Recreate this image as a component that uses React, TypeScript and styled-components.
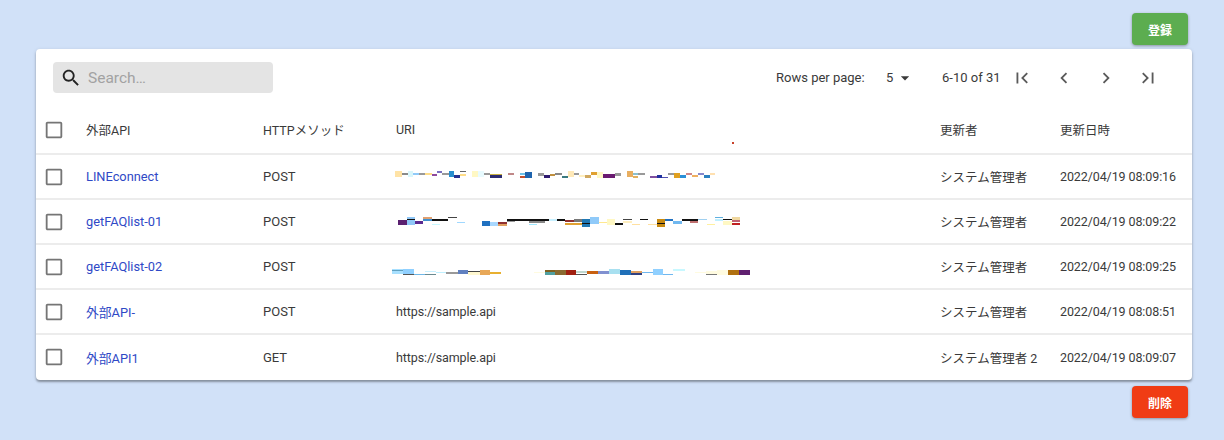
import React from 'react'
import styled, { createGlobalStyle } from 'styled-components'

const GlobalStyle = createGlobalStyle`
  html, body {
    margin: 0;
    padding: 0;
    background: #d1e1f8;
  }
  body {
    font-family: Roboto, "Noto Sans CJK JP", sans-serif;
  }
`

const Page = styled.div`
  box-sizing: border-box;
  width: 1224px;
  height: 440px;
  padding: 13px 32px 0 36px;
  display: flex;
  flex-direction: column;
  overflow: hidden;
`

const ActionRow = styled.div<{ $gap: number }>`
  display: flex;
  justify-content: flex-end;
  padding-right: 4px;
  margin: ${p => p.$gap}px 0;
`

const ActionButton = styled.button<{ $color: string }>`
  width: 56px;
  height: 32px;
  padding: 0;
  border: 0;
  border-radius: 4px;
  background: ${p => p.$color};
  color: #fff;
  font-family: inherit;
  font-size: 12px;
  font-weight: 700;
  box-shadow: 0 1px 3px rgba(0, 0, 0, 0.35);
`

const Card = styled.div`
  position: relative;
  background: #fff;
  border-radius: 4px;
  height: 331px;
  box-shadow: 0 2px 2px rgba(0, 0, 0, 0.3), 0 1px 4px rgba(0, 0, 0, 0.12);
  overflow: hidden;
`

const Toolbar = styled.div`
  box-sizing: border-box;
  height: 60px;
  padding: 0 23px 3px 17px;
  display: flex;
  align-items: center;
  justify-content: space-between;
  color: #3a3a3a;
  font-size: 13px;
`

const SearchBox = styled.div`
  box-sizing: border-box;
  width: 220px;
  height: 31px;
  padding-left: 7px;
  display: flex;
  align-items: center;
  gap: 6px;
  background: #e4e4e4;
  border-radius: 4px;
  color: #a2a2a2;
  font-size: 15.5px;
  svg {
    color: #222;
  }
`

const Pager = styled.div`
  display: flex;
  align-items: center;
`

const PagerLabel = styled.span`
  width: 110px;
`

const PageSize = styled.span`
  width: 56px;
  display: flex;
  align-items: center;
  gap: 2px;
`

const PageRange = styled.span`
  width: 59px;
`

const PagerButton = styled.span`
  width: 42px;
  display: flex;
  justify-content: center;
  color: #5a5a5a;
`

const Icon = styled.svg`
  display: block;
  flex: none;
  fill: currentColor;
`

const Table = styled.table`
  width: 100%;
  border-collapse: collapse;
  table-layout: fixed;
  color: #3a3a3a;
  font-size: 12.5px;
`

const HeadCell = styled.th<{ $width: number }>`
  width: ${p => p.$width}px;
  height: 45px;
  padding: 0 0 3px 10px;
  box-sizing: border-box;
  text-align: left;
  font-weight: 400;
  border-bottom: 2px solid #ececec;
`

const Cell = styled.td`
  height: 45px;
  padding: 0 0 0 10px;
  box-sizing: border-box;
  white-space: nowrap;
  border-bottom: 2px solid #ececec;
  tr:last-child > & {
    border-bottom: 0;
  }
`

const CheckCell = styled(Cell)`
  padding-left: 7px;
  color: #757575;
`

const CheckHead = styled(HeadCell)`
  padding-left: 7px;
  color: #757575;
`

const MethodCell = styled(Cell)`
  font-size: 13px;
`

const TightCell = styled(Cell)`
  letter-spacing: -0.1px;
`

const RowLink = styled.a`
  color: #2f49c6;
  font-size: 12.8px;
  text-decoration: none;
`

const Smudge = styled.svg`
  display: block;
  margin-left: -6px;
  filter: blur(0.25px);
`

const Speck = styled.span`
  position: absolute;
  left: 696px;
  top: 93px;
  width: 2px;
  height: 2px;
  background: #c8402a;
`

type Seg = [number, number, number, number, string]

// x from 390, y from the row centre; the scrubbed-out URLs in the screenshot
const smudge1: Seg[] = [
  [395, -6, 7, 6, '#ffe3a6'], [402, -4, 6, 2, '#8a8a8a'], [408, -6, 5, 6, '#d8f6fb'], [413, -4, 6, 2, '#90caf9'],
  [419, -4, 6, 2, '#999'], [425, -4, 7, 2, '#ffdd88'], [432, -3, 5, 2, '#8e4a9e'], [437, -6, 5, 2, '#7a6fc0'],
  [442, -4, 7, 2, '#999'], [449, -6, 5, 6, '#2a8fcf'], [454, -2, 6, 3, '#27308f'], [460, -6, 6, 1, '#666'],
  [460, -3, 6, 2, '#ffdd88'], [472, -6, 6, 6, '#fff8c4'], [478, -6, 6, 6, '#e8fbff'], [484, -4, 6, 2, '#999'],
  [490, -2, 12, 3, '#2b2b70'], [490, -3, 12, 1, '#c8b040'], [508, -4, 6, 2, '#c08888'], [520, -4, 5, 2, '#6ec1e8'],
  [520, -1, 5, 2, '#c05030'], [525, -5, 7, 6, '#1e64ae'], [538, -4, 6, 3, '#999'], [544, -2, 6, 3, '#2e1a70'],
  [550, -3, 5, 2, '#c09040'], [555, -4, 7, 2, '#888'], [562, -1, 6, 2, '#3a7a80'], [568, -6, 6, 6, '#ffe9b8'],
  [574, -4, 5, 2, '#999'], [579, -2, 6, 2, '#ffefc0'], [585, -2, 6, 3, '#d0a860'], [591, -5, 6, 3, '#e0a030'],
  [597, -5, 6, 6, '#fff8c4'], [603, -3, 12, 4, '#6a1a70'], [615, -4, 6, 3, '#999'], [627, -6, 6, 6, '#e8ae60'],
  [633, -4, 5, 2, '#8ac0d0'], [633, -1, 5, 2, '#e0b060'], [638, -4, 7, 2, '#999'], [650, -1, 7, 2, '#8050a0'],
  [657, -2, 5, 3, '#2030a0'], [662, 0, 6, 1, '#5050b0'], [668, -4, 6, 2, '#999'], [674, -4, 6, 5, '#e0a020'],
  [680, -2, 6, 3, '#2a90d8'], [686, -4, 6, 2, '#d08888'], [692, -2, 6, 2, '#f0b060'], [698, -4, 6, 2, '#8888cc'],
  [704, -2, 6, 3, '#2a80c0'], [710, -4, 5, 2, '#ffe0b0'],
]

const smudge2: Seg[] = [
  [398, -2, 9, 5, '#5a2070'], [407, -5, 8, 8, '#90c8f8'], [407, -3, 8, 1, '#111'], [415, -1, 8, 3, '#5a2a90'],
  [423, -5, 9, 2, '#e0a070'], [423, -3, 9, 2, '#4090d0'], [432, -3, 16, 2, '#111'], [432, 2, 8, 1, '#c8f8ff'],
  [448, -5, 9, 1, '#444'], [457, 0, 8, 1, '#a0d8ff'], [482, -1, 8, 5, '#2070c0'], [490, 0, 8, 4, '#a8d8ff'],
  [498, 0, 9, 2, '#903030'], [498, 2, 9, 2, '#e0a060'], [507, -3, 42, 2, '#111'], [507, -1, 8, 1, '#999'],
  [529, -1, 16, 2, '#888'], [529, 2, 8, 1, '#a0e8ff'], [549, -3, 8, 2, '#c8f0ff'], [557, -3, 8, 2, '#111'],
  [565, -2, 9, 2, '#903030'], [565, 1, 9, 2, '#e0a030'], [574, -3, 8, 3, '#777'], [574, 1, 8, 2, '#e0a030'],
  [582, -3, 8, 8, '#1f78b4'], [582, 1, 8, 1, '#111'], [590, -5, 9, 7, '#90caf9'], [599, 0, 8, 1, '#ffe890'],
  [607, -3, 8, 6, '#fff8c4'], [615, 1, 8, 2, '#111'], [623, -3, 9, 1, '#444'], [623, -1, 9, 2, '#ffefc0'],
  [632, 2, 8, 1, '#ffe0a0'], [640, -3, 8, 1, '#111'], [648, 2, 9, 1, '#ffe0a0'], [657, -3, 8, 8, '#c88a10'],
  [657, 1, 8, 1, '#111'], [665, -3, 8, 2, '#2070c0'], [673, -1, 9, 3, '#70b8f0'], [682, -3, 16, 2, '#111'],
  [690, -1, 8, 2, '#c07070'], [698, -3, 9, 1, '#a0d0f0'], [707, 2, 8, 1, '#fff0a0'], [715, -5, 8, 1, '#60b0e0'],
  [715, -3, 8, 2, '#c0f0ff'], [723, -3, 9, 1, '#111'], [723, -1, 9, 4, '#fff8c4'], [732, -5, 8, 3, '#f0d8a0'],
  [732, -2, 8, 2, '#c06070'], [732, 1, 8, 2, '#c02020'],
]

const smudge3: Seg[] = [
  [392, 2, 11, 5, '#a8e0ff'], [392, 3, 11, 1, '#60a0c0'], [403, 2, 11, 5, '#90d0ff'], [403, 7, 11, 1, '#555'],
  [414, 7, 11, 1, '#70b8e8'], [425, 4, 11, 1, '#c8f0ff'], [425, 7, 11, 1, '#6a8a90'], [436, 5, 10, 1, '#c0f0ff'],
  [446, 5, 12, 2, '#999'], [458, 3, 10, 4, '#6080c0'], [468, 4, 12, 4, '#fff8d0'], [468, 4, 12, 1, '#444'],
  [480, 3, 10, 5, '#e8a858'], [490, 5, 11, 2, '#e8b030'], [534, 5, 11, 1, '#fffbe0'], [545, 3, 10, 2, '#806020'],
  [545, 5, 10, 3, '#50a0a0'], [555, 3, 11, 5, '#8a6a30'], [566, 3, 10, 5, '#a02010'], [576, 4, 11, 2, '#c0d8d0'],
  [576, 7, 11, 1, '#555'], [587, 4, 11, 3, '#c86010'], [598, 4, 11, 3, '#8090d0'], [609, 2, 11, 5, '#a8e0f0'],
  [620, 3, 11, 5, '#2070b8'], [631, 4, 11, 2, '#e0a060'], [631, 6, 11, 2, '#304080'], [642, 5, 11, 1, '#70b8f0'],
  [653, 2, 10, 6, '#90d0ff'], [663, 7, 10, 1, '#70b8f0'], [673, 2, 12, 2, '#c8f8ff'], [695, 5, 11, 1, '#fffbe0'],
  [706, 4, 11, 4, '#fffbe0'], [706, 7, 11, 1, '#777'], [717, 3, 11, 5, '#fffbe0'], [728, 3, 11, 5, '#b07010'],
  [739, 3, 11, 5, '#602070'],
]

const paths = {
  search: 'M15.5 14h-.79l-.28-.27C15.41 12.59 16 11.11 16 9.5 16 5.91 13.09 3 9.5 3S3 5.91 3 9.5 5.91 16 9.5 16c1.61 0 3.09-.59 4.23-1.57l.27.28v.79l5 4.99L20.49 19l-4.99-5zm-6 0C7.01 14 5 11.99 5 9.5S7.01 5 9.5 5 14 7.01 14 9.5 11.99 14 9.5 14z',
  checkbox: 'M19 5v14H5V5h14m0-2H5c-1.1 0-2 .9-2 2v14c0 1.1.9 2 2 2h14c1.1 0 2-.9 2-2V5c0-1.1-.9-2-2-2z',
  drop: 'M7 10l5 5 5-5z',
  first: 'M18.41 16.59L13.82 12l4.59-4.59L17 6l-6 6 6 6zM6 6h2v12H6z',
  prev: 'M15.41 7.41L14 6l-6 6 6 6 1.41-1.41L10.83 12z',
  next: 'M10 6L8.59 7.41 13.17 12l-4.58 4.59L10 18l6-6z',
  last: 'M5.59 7.41L10.18 12l-4.59 4.59L7 18l6-6-6-6zM16 6h2v12h-2z',
}

const MuiIcon = ({ name, size }: { name: keyof typeof paths; size: number }) => (
  <Icon width={size} height={size} viewBox='0 0 24 24'>
    <path d={paths[name]} />
  </Icon>
)

const Scrubbed = ({ segs }: { segs: Seg[] }) => (
  <Smudge width={370} height={20} viewBox='390 -10 370 20'>
    {segs.map(([x, y, w, h, c], i) => <rect key={i} x={x} y={y} width={w} height={h} fill={c} />)}
  </Smudge>
)

const rows = [
  { name: 'LINEconnect', method: 'POST', uri: <Scrubbed segs={smudge1} />, user: 'システム管理者', date: '2022/04/19 08:09:16' },
  { name: 'getFAQlist-01', method: 'POST', uri: <Scrubbed segs={smudge2} />, user: 'システム管理者', date: '2022/04/19 08:09:22' },
  { name: 'getFAQlist-02', method: 'POST', uri: <Scrubbed segs={smudge3} />, user: 'システム管理者', date: '2022/04/19 08:09:25' },
  { name: '外部API-', method: 'POST', uri: 'https://sample.api', user: 'システム管理者', date: '2022/04/19 08:08:51' },
  { name: '外部API1', method: 'GET', uri: 'https://sample.api', user: 'システム管理者 2', date: '2022/04/19 08:09:07' },
]

const App = () => (
  <Page>
    <GlobalStyle />
    <ActionRow $gap={0}>
      <ActionButton $color='#5cad50'>登録</ActionButton>
    </ActionRow>
    <ActionRow $gap={2} />
    <Card>
      <Speck />
      <Toolbar>
        <SearchBox>
          <MuiIcon name='search' size={22} />
          Search…
        </SearchBox>
        <Pager>
          <PagerLabel>Rows per page:</PagerLabel>
          <PageSize>5 <MuiIcon name='drop' size={20} /></PageSize>
          <PageRange>6-10 of 31</PageRange>
          <PagerButton><MuiIcon name='first' size={22} /></PagerButton>
          <PagerButton><MuiIcon name='prev' size={22} /></PagerButton>
          <PagerButton><MuiIcon name='next' size={22} /></PagerButton>
          <PagerButton><MuiIcon name='last' size={22} /></PagerButton>
        </Pager>
      </Toolbar>
      <Table>
        <thead>
          <tr>
            <CheckHead $width={40}><MuiIcon name='checkbox' size={22} /></CheckHead>
            <HeadCell $width={177}>外部API</HeadCell>
            <HeadCell $width={133}>HTTPメソッド</HeadCell>
            <HeadCell $width={544}>URI</HeadCell>
            <HeadCell $width={120}>更新者</HeadCell>
            <HeadCell $width={142}>更新日時</HeadCell>
          </tr>
        </thead>
        <tbody>
          {rows.map(row => (
            <tr key={row.name}>
              <CheckCell><MuiIcon name='checkbox' size={22} /></CheckCell>
              <Cell><RowLink>{row.name}</RowLink></Cell>
              <MethodCell>{row.method}</MethodCell>
              <TightCell>{row.uri}</TightCell>
              <Cell>{row.user}</Cell>
              <TightCell>{row.date}</TightCell>
            </tr>
          ))}
        </tbody>
      </Table>
    </Card>
    <ActionRow $gap={6}>
      <ActionButton $color='#f03c14'>削除</ActionButton>
    </ActionRow>
  </Page>
)

export default App
